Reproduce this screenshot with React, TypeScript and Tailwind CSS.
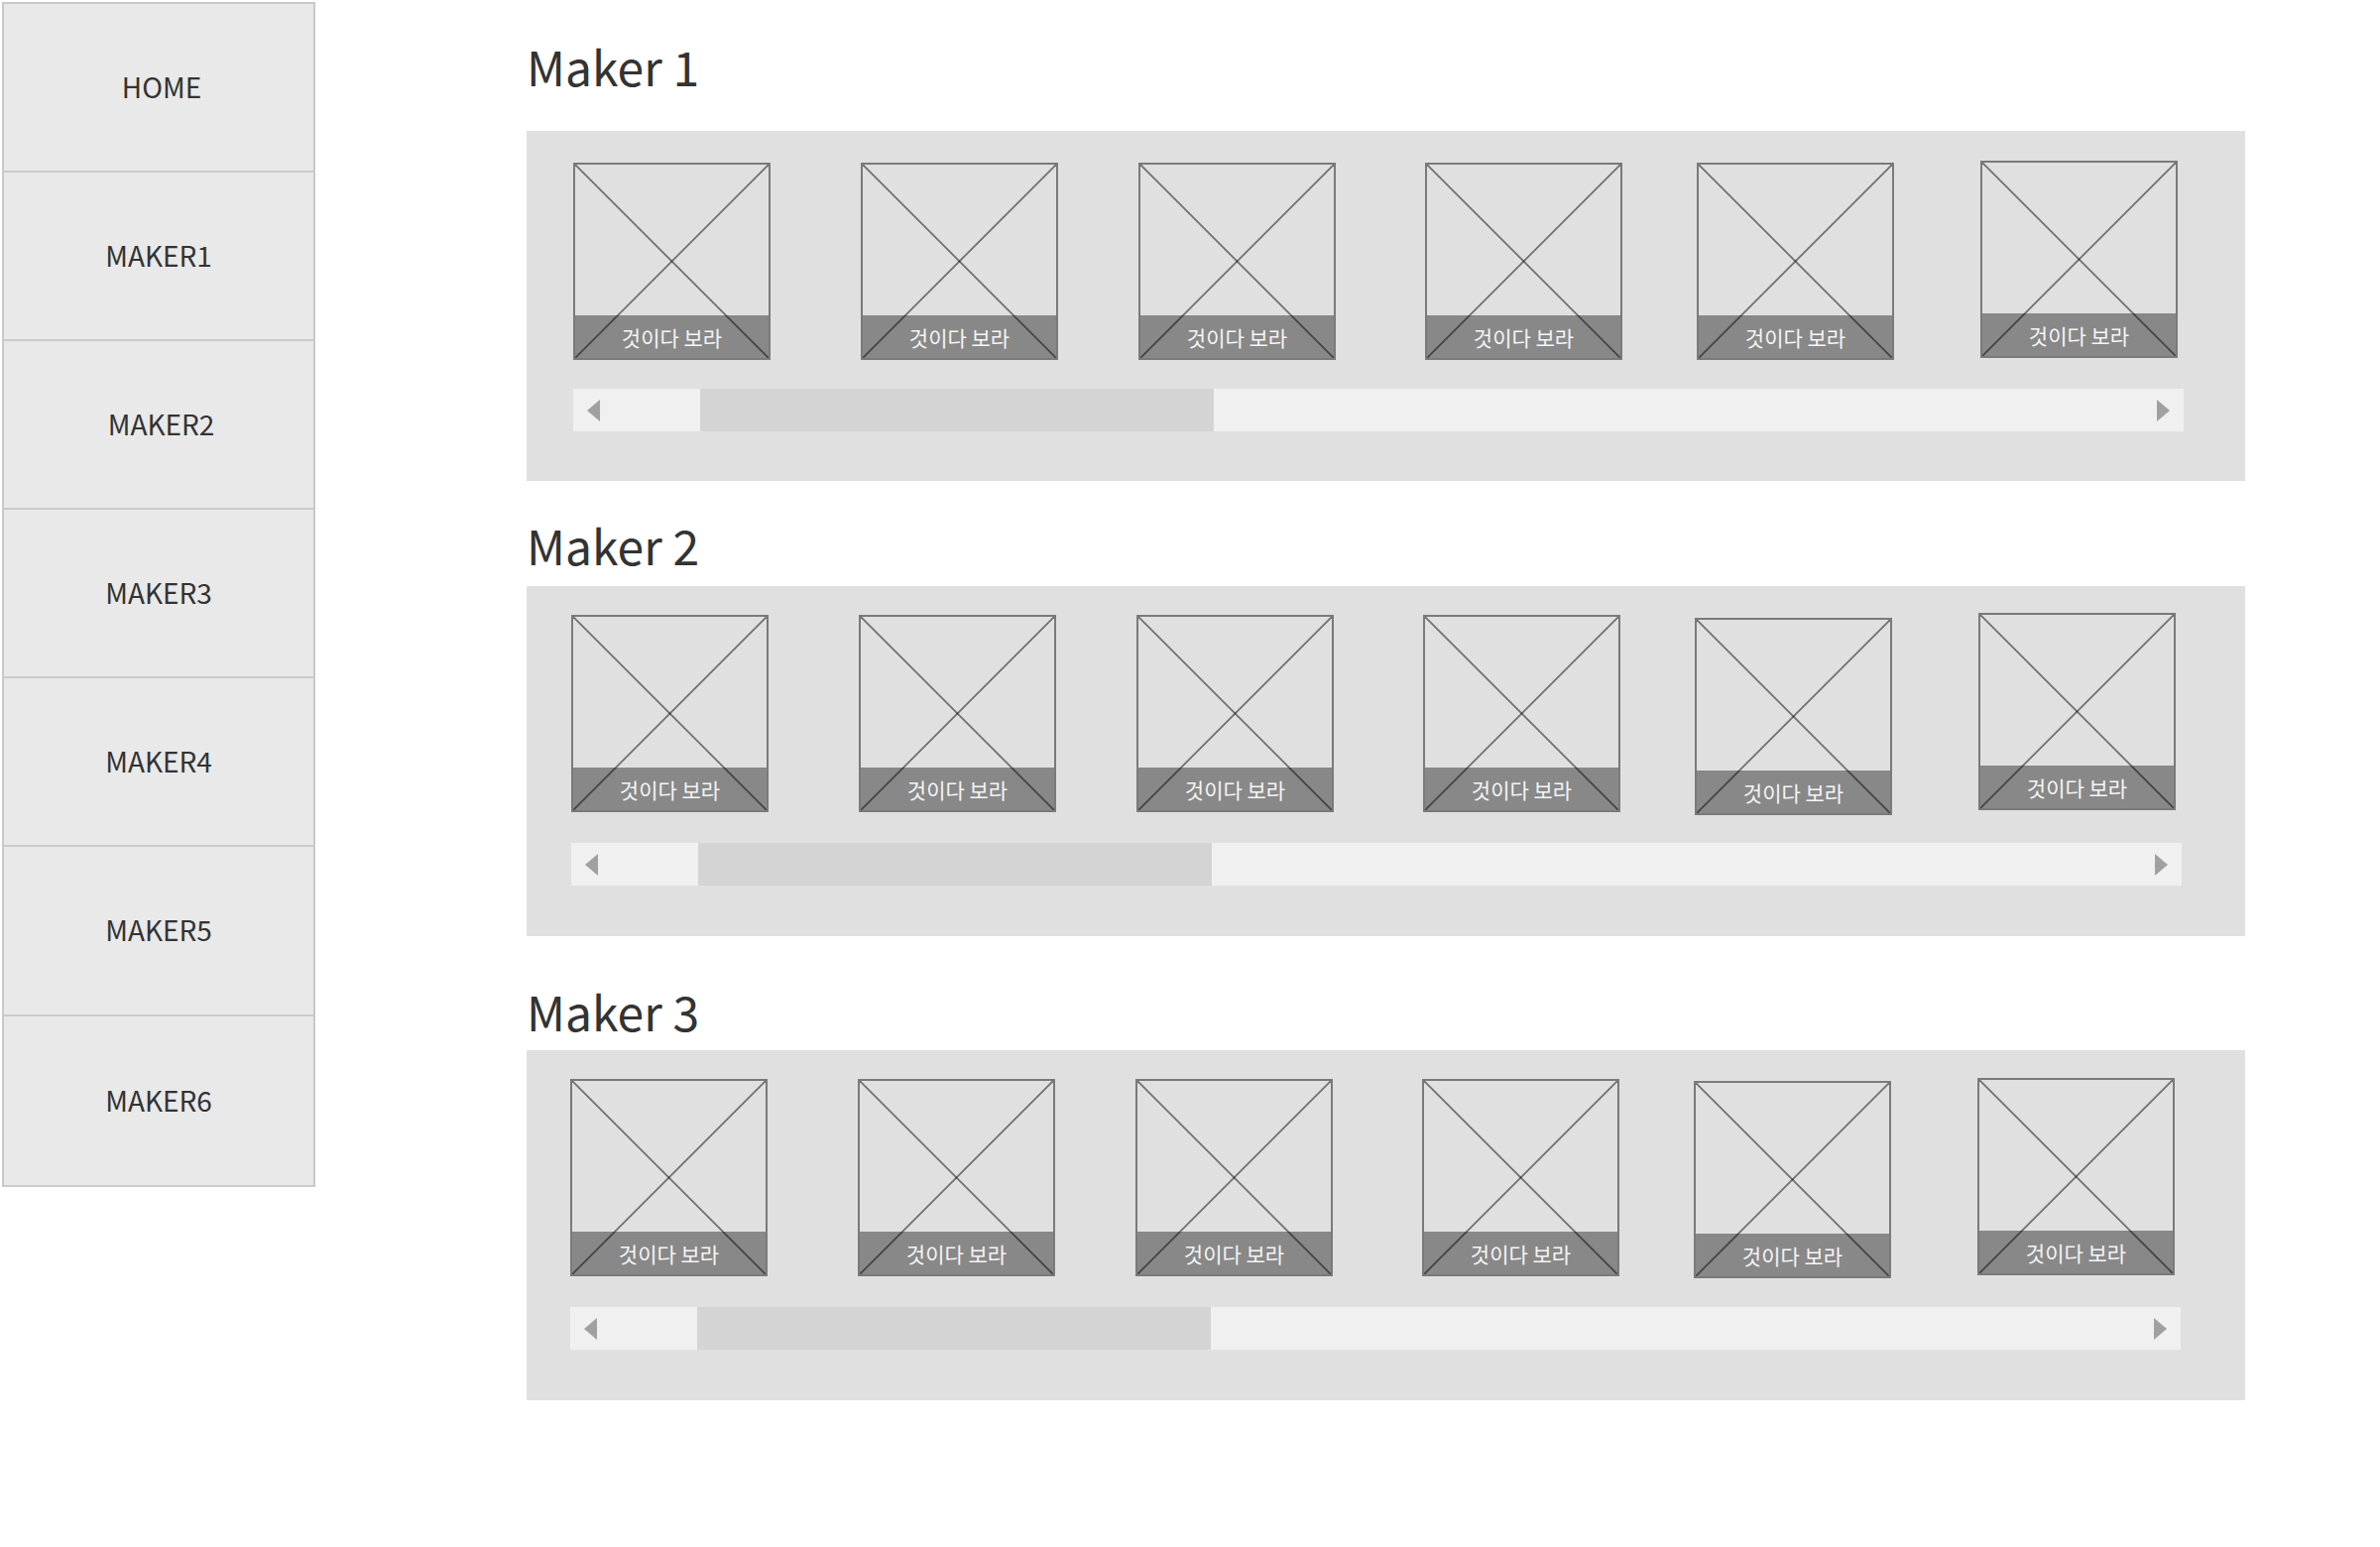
import React from "react";

const MENU = [
  { label: "HOME", cls: "h-[170px] pl-[6px]" },
  { label: "MAKER1", cls: "h-[170px]" },
  { label: "MAKER2", cls: "h-[170px] pl-[5px]" },
  { label: "MAKER3", cls: "h-[170px]" },
  { label: "MAKER4", cls: "h-[170px]" },
  { label: "MAKER5", cls: "h-[171px]" },
  { label: "MAKER6", cls: "h-[172px]" },
];

// horizontal spacing between the thumbnails (wireframe is hand placed)
const GAPS = ["", "ml-[91px]", "ml-[81px]", "ml-[90px]", "ml-[75px]", "ml-[87px]"];

interface Section {
  title: string;
  titleGap: string;
  panelGap: string;
  pad: string;
  barGap: string;
  offsets: string[];
}

const SECTIONS: Section[] = [
  {
    title: "Maker 1",
    titleGap: "mt-[42px]",
    panelGap: "mt-[42px]",
    pad: "pt-[30px] pl-[47px]",
    barGap: "mt-[25px]",
    offsets: ["mt-[2px]", "mt-[2px]", "mt-[2px]", "mt-[2px]", "mt-[2px]", "mt-0"],
  },
  {
    title: "Maker 2",
    titleGap: "mt-[40px]",
    panelGap: "mt-[18px]",
    pad: "pt-[27px] pl-[45px]",
    barGap: "mt-[27px]",
    offsets: ["mt-[2px]", "mt-[2px]", "mt-[2px]", "mt-[2px]", "mt-[5px]", "mt-0"],
  },
  {
    title: "Maker 3",
    titleGap: "mt-[51px]",
    panelGap: "mt-[16px]",
    pad: "pt-[28px] pl-[44px]",
    barGap: "mt-[26px]",
    offsets: ["mt-[1px]", "mt-[1px]", "mt-[1px]", "mt-[1px]", "mt-[3px]", "mt-0"],
  },
];

function Thumb({ className }: { className: string }) {
  return (
    <div className={`relative flex h-[199px] w-[199px] shrink-0 flex-col justify-end border-2 border-[#7a7a7a] bg-[#e0e0e0] ${className}`}>
      <div className="flex h-[43px] items-center justify-center bg-[#888888] pt-[2px] text-[21px] leading-none text-[#f5f5f5]">
        것이다 보라
      </div>
      <svg className="absolute inset-0 h-full w-full" viewBox="0 0 100 100" preserveAspectRatio="none">
        <line x1="0" y1="0" x2="100" y2="100" stroke="rgba(0,0,0,0.5)" strokeWidth="1.8" vectorEffect="non-scaling-stroke" />
        <line x1="100" y1="0" x2="0" y2="100" stroke="rgba(0,0,0,0.5)" strokeWidth="1.8" vectorEffect="non-scaling-stroke" />
      </svg>
    </div>
  );
}

function ScrollBar({ className }: { className: string }) {
  return (
    <div className={`flex h-[43px] w-[1624px] ${className}`}>
      <div className="flex w-[128px] items-center bg-[#f0f0f0] pl-[14px]">
        <svg width="13" height="22" viewBox="0 0 13 22">
          <polygon points="13,0 13,22 0,11" fill="#a0a0a0" />
        </svg>
      </div>
      <div className="w-[518px] bg-[#d4d4d4]" />
      <div className="flex flex-1 items-center justify-end bg-[#f0f0f0] pr-[14px]">
        <svg width="13" height="22" viewBox="0 0 13 22">
          <polygon points="0,0 0,22 13,11" fill="#a0a0a0" />
        </svg>
      </div>
    </div>
  );
}

export default function App() {
  return (
    <div className="flex min-h-[1560px] w-[2400px] items-start bg-white font-['Noto_Sans_CJK_KR','Noto_Sans',sans-serif] text-[#333333]">
      <nav className="ml-[2px] mt-[2px] flex w-[316px] flex-col border-x-2 border-t-2 border-[#c8c8c8] bg-[#e9e9e9]">
        {MENU.map((item) => (
          <div
            key={item.label}
            className={`flex items-center justify-center border-b-2 border-[#cbcbcb] pb-[3px] text-[28px] leading-none ${item.cls}`}
          >
            {item.label}
          </div>
        ))}
      </nav>

      <main className="ml-[213px] flex flex-col">
        {SECTIONS.map((s) => (
          <section key={s.title} className="flex flex-col">
            <h2 className={`text-[48px] font-normal leading-none ${s.titleGap}`}>{s.title}</h2>
            <div className={`flex h-[353px] w-[1733px] flex-col bg-[#e0e0e0] ${s.panelGap} ${s.pad}`}>
              <div className="flex h-[205px] items-start">
                {s.offsets.map((off, i) => (
                  <Thumb key={i} className={`${GAPS[i]} ${off}`} />
                ))}
              </div>
              <ScrollBar className={s.barGap} />
            </div>
          </section>
        ))}
      </main>
    </div>
  );
}
